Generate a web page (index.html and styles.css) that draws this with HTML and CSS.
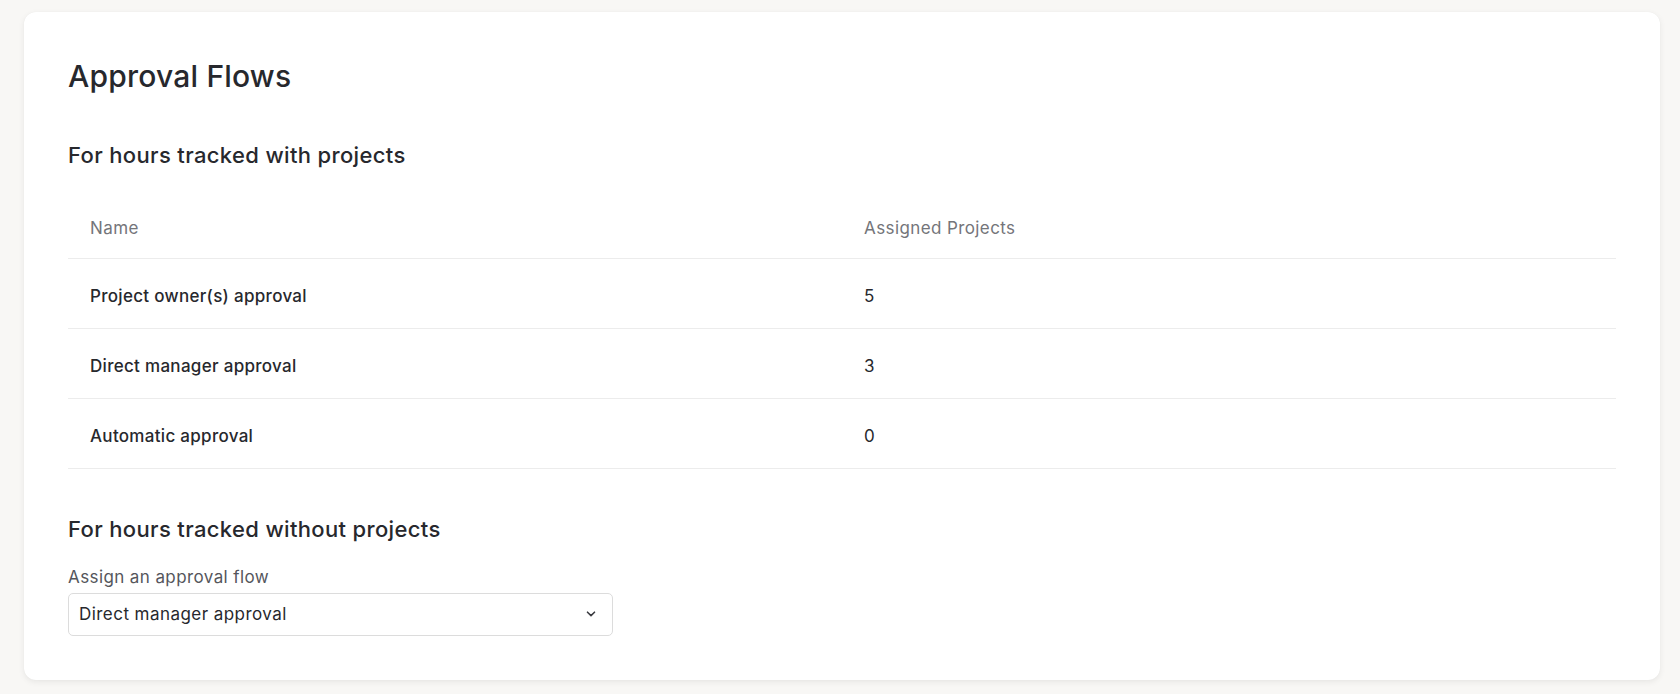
FILE: index.html
```html
<!DOCTYPE html>
<html lang="en">
<head>
<meta charset="utf-8">
<title>Approval Flows</title>
<link rel="stylesheet" href="styles.css">
</head>
<body>
  <main class="page">
    <section class="card">
      <h1 class="card-title">Approval Flows</h1>

      <h2 class="section-title">For hours tracked with projects</h2>
      <table class="flows">
        <thead>
          <tr>
            <th>Name</th>
            <th>Assigned Projects</th>
          </tr>
        </thead>
        <tbody>
          <tr>
            <td class="flow-name">Project owner(s) approval</td>
            <td class="flow-count">5</td>
          </tr>
          <tr>
            <td class="flow-name">Direct manager approval</td>
            <td class="flow-count">3</td>
          </tr>
          <tr>
            <td class="flow-name">Automatic approval</td>
            <td class="flow-count">0</td>
          </tr>
        </tbody>
      </table>

      <h2 class="section-title section-title--spaced">For hours tracked without projects</h2>
      <label class="field-label" for="flow-select">Assign an approval flow</label>
      <div class="select">
        <span class="select-value" id="flow-select">Direct manager approval</span>
        <svg class="select-chevron" width="10" height="6" viewBox="0 0 10 6" aria-hidden="true">
          <path d="M1.5 1.2 L5 4.6 L8.5 1.2" fill="none" stroke="#3a3b40" stroke-width="1.6" stroke-linecap="round" stroke-linejoin="round"/>
        </svg>
      </div>
    </section>
  </main>
</body>
</html>
```

FILE: styles.css
```css
* {
  box-sizing: border-box;
}

html,
body {
  margin: 0;
  padding: 0;
  background: #f8f7f5;
}

body {
  font-family: Inter, "Noto Sans", "Liberation Sans", sans-serif;
  color: #27282d;
}

.page {
  padding: 12px 20px 15px 24px;
}

.card {
  background: #ffffff;
  border-radius: 12px;
  box-shadow: 0 2px 6px rgba(0, 0, 0, 0.07), 0 0 1px rgba(0, 0, 0, 0.05);
  padding: 44px;
}

.card-title {
  margin: 0;
  font-size: 30px;
  line-height: 40px;
  font-weight: 500;
  letter-spacing: 0.2px;
}

.section-title {
  margin: 45px 0 0;
  font-size: 22px;
  line-height: 28px;
  font-weight: 500;
  letter-spacing: 0.35px;
}

.section-title--spaced {
  margin-top: 46px;
}

.flows {
  width: 100%;
  margin-top: 29px;
  border-collapse: collapse;
  table-layout: fixed;
}

.flows th {
  height: 60px;
  padding: 0 22px;
  text-align: left;
  font-size: 17px;
  font-weight: 400;
  letter-spacing: 0.4px;
  color: #74757a;
  border-bottom: 1px solid #ececec;
  vertical-align: middle;
}

.flows td {
  height: 70px;
  padding: 5px 22px 0;
  font-size: 17px;
  letter-spacing: 0.3px;
  border-bottom: 1px solid #ececec;
  vertical-align: middle;
}

.flow-name {
  font-weight: 500;
}

.flow-count {
  font-weight: 400;
}

.field-label {
  display: block;
  margin-top: 22px;
  font-size: 17px;
  line-height: 24px;
  letter-spacing: 0.4px;
  color: #55565c;
}

.select {
  display: flex;
  align-items: center;
  justify-content: space-between;
  width: 545px;
  height: 43px;
  margin-top: 4px;
  padding: 0 16px 0 10px;
  border: 1px solid #dcdcdc;
  border-radius: 5px;
  font-size: 17px;
  letter-spacing: 0.45px;
}

.select-chevron {
  display: block;
}
```
